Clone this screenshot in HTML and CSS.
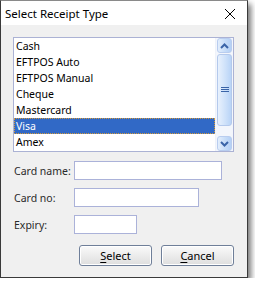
FILE: index.html
```html
<!DOCTYPE html>
<html>
<head>
<meta charset="utf-8">
<link rel="stylesheet" href="styles.css">
</head>
<body>
<div class="window">
  <div class="titlebar">
    <span class="title">Select Receipt Type</span>
    <svg class="close" width="12" height="12" viewBox="0 0 12 12"><path d="M1 1 L11 11 M11 1 L1 11" stroke="#000" stroke-width="1" fill="none"/></svg>
  </div>
  <div class="content">
    <div class="listbox">
      <ul class="items">
        <li>Cash</li>
        <li>EFTPOS Auto</li>
        <li>EFTPOS Manual</li>
        <li>Cheque</li>
        <li>Mastercard</li>
        <li class="selected">Visa</li>
        <li>Amex</li>
      </ul>
      <div class="scrollbar">
        <div class="sbtn">
          <svg width="9" height="6" viewBox="0 0 9 6"><path d="M1 5 L4.5 1.5 L8 5" stroke="#3a64a8" stroke-width="2" fill="none"/></svg>
        </div>
        <div class="thumb">
          <svg width="8" height="6" viewBox="0 0 8 6"><path d="M0 0.5 H8 M0 2.5 H8 M0 4.5 H8" stroke="#3a64a8" stroke-width="1"/></svg>
        </div>
        <div class="track"></div>
        <div class="sbtn">
          <svg width="9" height="6" viewBox="0 0 9 6"><path d="M1 1 L4.5 4.5 L8 1" stroke="#3a64a8" stroke-width="2" fill="none"/></svg>
        </div>
      </div>
    </div>
    <div class="fields">
      <div class="row"><label class="lbl">Card name:</label><div class="input w-name"></div></div>
      <div class="row"><label class="lbl">Card no:</label><div class="input w-no"></div></div>
      <div class="row"><label class="lbl">Expiry:</label><div class="input w-exp"></div></div>
    </div>
    <div class="buttons">
      <div class="btn"><u>S</u>elect</div>
      <div class="btn"><u>C</u>ancel</div>
    </div>
  </div>
</div>
</body>
</html>
```
FILE: styles.css
```css
html, body {
  margin: 0;
  padding: 0;
  background: #ffffff;
}
body {
  font-family: "Noto Sans", "Open Sans", sans-serif;
  font-size: 10.5px;
  color: #000;
}
.window {
  width: 248px;
  height: 278px;
  box-sizing: border-box;
  border: 1px solid #3a3a3a;
  border-top-color: #8a8a8a;
  background: #f0f0f0;
  box-shadow: 3px 4px 6px rgba(0,0,0,0.55);
  display: flex;
  flex-direction: column;
}
.titlebar {
  height: 24px;
  background: #ffffff;
  display: flex;
  align-items: center;
  justify-content: space-between;
  padding: 0 11px 0 4px;
}
.title {
  font-size: 11.5px;
  margin-top: 1px;
}
.close {
  display: block;
  margin-top: 1px;
}
.content {
  flex: 1;
  padding: 12px 13px 0 12px;
  display: flex;
  flex-direction: column;
}
.listbox {
  width: 221px;
  height: 115px;
  box-sizing: border-box;
  border: 1px solid #abb2d4;
  background: #fff;
  display: flex;
}
.items {
  list-style: none;
  margin: 0;
  padding: 0;
  flex: 1;
}
.items li {
  height: 16px;
  line-height: 17px;
  padding-left: 2px;
  box-sizing: border-box;
}
.items li.selected {
  background: #3169c6;
  color: #fff;
  outline: 1px dotted #d49a3a;
  outline-offset: -1px;
}
.scrollbar {
  width: 17px;
  display: flex;
  flex-direction: column;
  background: #f3f6fc;
  border-left: 1px solid #eef2fa;
}
.sbtn {
  height: 15px;
  margin: 0 1px;
  border: 1px solid #b9cdef;
  border-radius: 3px;
  background: linear-gradient(to right, #e3eefc, #c4dbf8 60%, #b4d0f6);
  display: flex;
  align-items: center;
  justify-content: center;
  box-sizing: border-box;
}
.thumb {
  height: 72px;
  margin: 1px 1px 0;
  border: 1px solid #b4c9ec;
  border-radius: 3px;
  background: linear-gradient(to right, #e8f1fd, #cfe2fa 55%, #b9d4f7);
  display: flex;
  align-items: center;
  justify-content: center;
  box-sizing: border-box;
}
.track {
  flex: 1;
}
.fields {
  display: flex;
  flex-direction: column;
  gap: 8px;
  margin-top: 9px;
}
.row {
  display: flex;
  align-items: center;
}
.lbl {
  width: 61px;
  flex-shrink: 0;
  white-space: nowrap;
  padding-left: 1px;
  box-sizing: border-box;
  color: #2a2a2a;
}
.input {
  height: 19px;
  flex-shrink: 0;
  box-sizing: border-box;
  border: 1px solid #abb2d9;
  background: #fff;
}
.w-name { width: 148px; }
.w-no { width: 125px; }
.w-exp { width: 63px; }
.buttons {
  display: flex;
  justify-content: flex-end;
  gap: 9px;
  margin-top: 11px;
}
.btn {
  width: 73px;
  height: 21px;
  box-sizing: border-box;
  border: 1px solid #6f7f99;
  border-radius: 3px;
  background: linear-gradient(to bottom, #fafafa, #ececec 50%, #dedede);
  box-shadow: inset 0 0 0 1px #fff;
  display: flex;
  align-items: center;
  justify-content: center;
  font-size: 11px;
}
.btn u {
  text-decoration-thickness: 1px;
  text-underline-offset: 2px;
}
```
